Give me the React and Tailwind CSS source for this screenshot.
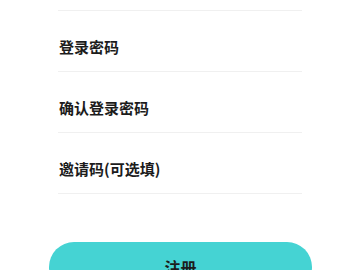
export default function App() {
  const rows = ['登录密码', '确认登录密码', '邀请码(可选填)'];
  return (
    <div
      className="w-[360px] h-[270px] overflow-hidden bg-white"
      style={{ fontFamily: '"Noto Sans CJK SC", "Noto Sans", sans-serif' }}
    >
      <div className="px-[58px]">
        <div className="h-[11px] border-b border-[#f0f0f0]" />
        {rows.map((label) => (
          <div
            key={label}
            className="flex h-[61px] items-center border-b border-[#f0f0f0] pl-px pt-[10px]"
          >
            <span className="text-[15px] font-bold leading-none text-[#1c1c1c]">{label}</span>
          </div>
        ))}
      </div>
      <div className="mt-[48px] px-[49px]">
        <button className="flex h-[50px] w-[263px] items-center justify-center rounded-[25px] bg-[#45d3d3] text-[16px] font-bold text-[#1c1c1c]">
          注册
        </button>
      </div>
    </div>
  );
}
